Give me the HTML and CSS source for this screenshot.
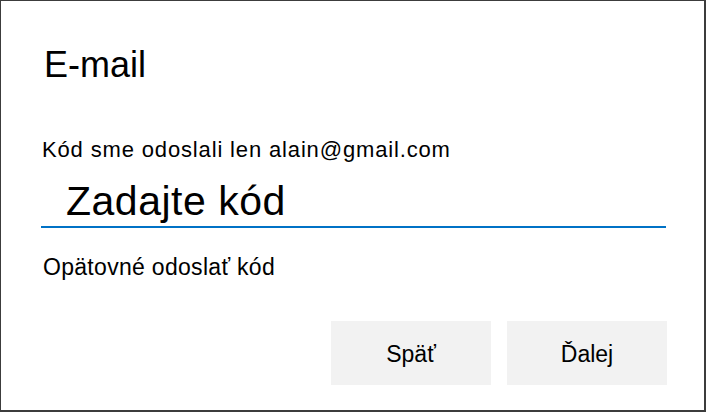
FILE: index.html
```html
<!DOCTYPE html>
<html lang="sk">
<head>
<meta charset="utf-8">
<title>E-mail</title>
<link rel="stylesheet" href="styles.css">
</head>
<body>
<div class="dialog">
  <h1 class="title">E-mail</h1>
  <p class="label">Kód sme odoslali len alain@gmail.com</p>
  <div class="code-field">Zadajte kód</div>
  <p class="resend">Opätovné odoslať kód</p>
  <div class="actions">
    <button class="btn" type="button">Späť</button>
    <button class="btn" type="button">Ďalej</button>
  </div>
</div>
</body>
</html>
```

FILE: styles.css
```css
html, body {
  margin: 0;
  padding: 0;
  background: #ffffff;
}

body {
  font-family: "Liberation Sans", Arial, sans-serif;
  color: #000000;
}

.dialog {
  box-sizing: border-box;
  width: 706px;
  height: 412px;
  border-style: solid;
  border-color: #3c3c3c;
  border-width: 1px 2px 2px 1px;
  padding: 43px 38px 0 40px;
  display: flex;
  flex-direction: column;
}

.title {
  margin: 0 0 0 3px;
  font-size: 36px;
  font-weight: normal;
  line-height: 42px;
}

.label {
  margin: 51px 0 0 1px;
  font-size: 22px;
  line-height: 26px;
  letter-spacing: 0.85px;
}

.code-field {
  margin-top: 14px;
  padding: 0 0 1px 25px;
  font-size: 41px;
  line-height: 48px;
  letter-spacing: 0.5px;
  border-bottom: 2px solid #0072c6;
}

.resend {
  margin: 25px 0 0 2px;
  font-size: 23px;
  line-height: 28px;
  letter-spacing: 0.3px;
}

.actions {
  margin-top: 40px;
  display: flex;
  justify-content: flex-end;
  gap: 16px;
  margin-right: -1px;
}

.btn {
  width: 160px;
  height: 64px;
  padding: 3px 0 0;
  border: none;
  background: #f2f2f2;
  font-family: "Liberation Sans", Arial, sans-serif;
  font-size: 23px;
  line-height: 61px;
  color: #000000;
  text-align: center;
}
```
